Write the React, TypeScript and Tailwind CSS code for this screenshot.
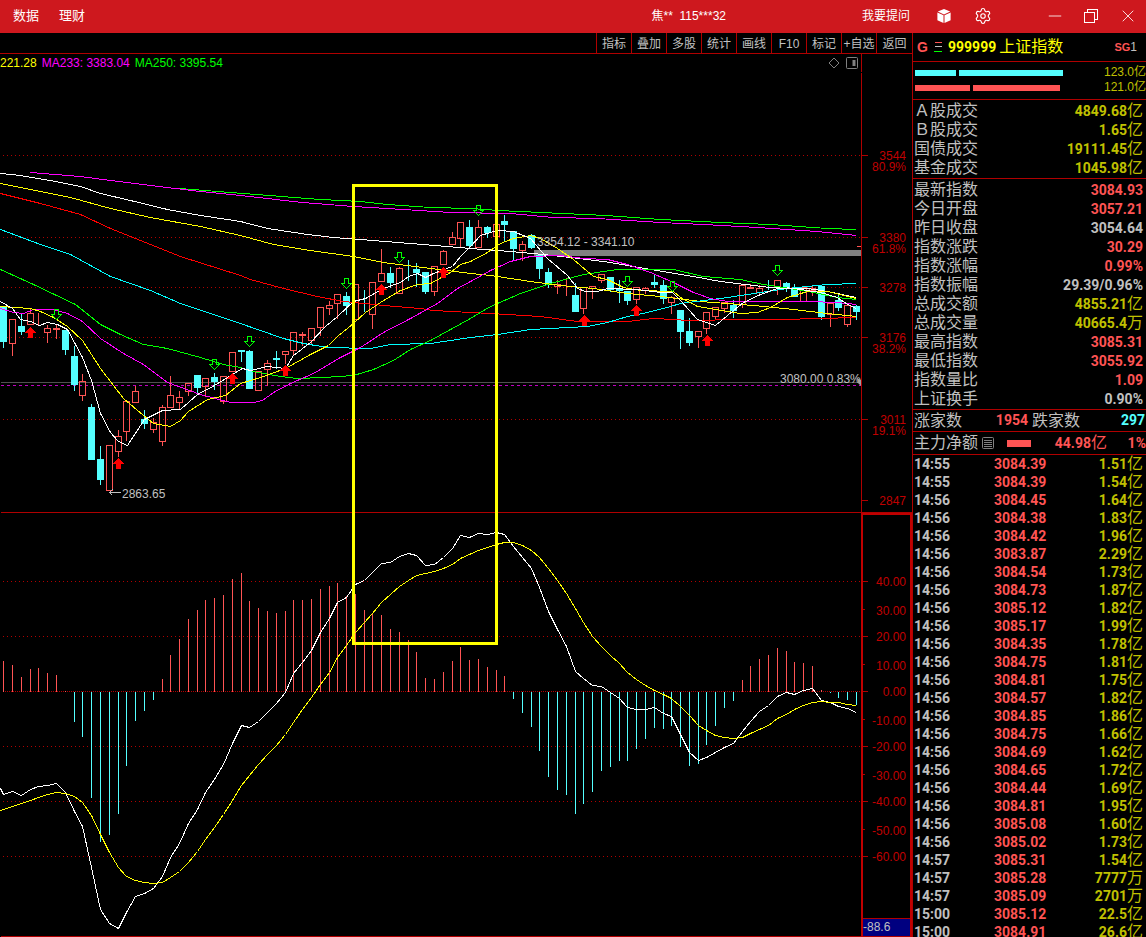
import { Settings, X, Minus } from "lucide-react";

const TOOLS = ["指标", "叠加", "多股", "统计", "画线", "F10", "标记", "+自选", "返回"];

type Quote = { label: string; value: string; unit?: string; color: string };

const RED = "text-[#ff5454]";
const GOLD = "text-[#c0c000]";
const GRAY = "text-[#c0c0c0]";

const TURNOVER: Quote[] = [
  { label: "Ａ股成交", value: "4849.68", unit: "亿", color: GOLD },
  { label: "Ｂ股成交", value: "1.65", unit: "亿", color: GOLD },
  { label: "国债成交", value: "19111.45", unit: "亿", color: GOLD },
  { label: "基金成交", value: "1045.98", unit: "亿", color: GOLD },
];

const QUOTES: Quote[] = [
  { label: "最新指数", value: "3084.93", color: RED },
  { label: "今日开盘", value: "3057.21", color: RED },
  { label: "昨日收盘", value: "3054.64", color: GRAY },
  { label: "指数涨跌", value: "30.29", color: RED },
  { label: "指数涨幅", value: "0.99%", color: RED },
  { label: "指数振幅", value: "29.39/0.96%", color: GRAY },
  { label: "总成交额", value: "4855.21", unit: "亿", color: GOLD },
  { label: "总成交量", value: "40665.4", unit: "万", color: GOLD },
  { label: "最高指数", value: "3085.31", color: RED },
  { label: "最低指数", value: "3055.92", color: RED },
  { label: "指数量比", value: "1.09", color: RED },
  { label: "上证换手", value: "0.90%", color: GRAY },
];

const TICKS = [
  ["14:55", "3084.39", "1.51", "亿"],
  ["14:55", "3084.39", "1.54", "亿"],
  ["14:56", "3084.45", "1.64", "亿"],
  ["14:56", "3084.38", "1.83", "亿"],
  ["14:56", "3084.42", "1.96", "亿"],
  ["14:56", "3083.87", "2.29", "亿"],
  ["14:56", "3084.54", "1.73", "亿"],
  ["14:56", "3084.73", "1.87", "亿"],
  ["14:56", "3085.12", "1.82", "亿"],
  ["14:56", "3085.17", "1.99", "亿"],
  ["14:56", "3084.35", "1.78", "亿"],
  ["14:56", "3084.75", "1.81", "亿"],
  ["14:56", "3084.81", "1.75", "亿"],
  ["14:56", "3084.57", "1.82", "亿"],
  ["14:56", "3084.85", "1.86", "亿"],
  ["14:56", "3084.75", "1.66", "亿"],
  ["14:56", "3084.69", "1.62", "亿"],
  ["14:56", "3084.65", "1.72", "亿"],
  ["14:56", "3084.44", "1.69", "亿"],
  ["14:56", "3084.81", "1.95", "亿"],
  ["14:56", "3085.08", "1.60", "亿"],
  ["14:56", "3085.02", "1.73", "亿"],
  ["14:57", "3085.31", "1.54", "亿"],
  ["14:57", "3085.28", "7777", "万"],
  ["14:57", "3085.09", "2701", "万"],
  ["15:00", "3085.12", "22.5", "亿"],
  ["15:00", "3084.91", "26.6", "亿"],
];

// [up, body top, body bottom, high, low]
const CANDLES = [
  [0, 306, 341, 306, 347], [1, 319, 343, 319, 355], [0, 326, 331, 313, 334], [1, 313, 324, 308, 324],
  [1, 320, 320, 312, 324], [1, 328, 332, 324, 342], [1, 328, 329, 323, 338], [0, 330, 349, 329, 354],
  [0, 356, 384, 345, 390], [1, 381, 395, 373, 400], [0, 407, 459, 403, 459], [0, 459, 479, 445, 484],
  [1, 445, 490, 445, 490], [1, 436, 451, 429, 456], [1, 401, 431, 401, 440], [1, 391, 402, 385, 402],
  [0, 419, 423, 409, 428], [1, 422, 429, 417, 432], [1, 407, 441, 404, 445], [1, 395, 407, 375, 407],
  [1, 397, 402, 390, 408], [1, 383, 391, 383, 395], [0, 375, 387, 374, 392], [1, 378, 386, 378, 396],
  [0, 377, 381, 372, 389], [1, 376, 401, 376, 403], [1, 352, 371, 352, 371], [0, 350, 351, 350, 361],
  [0, 351, 388, 349, 388], [1, 371, 390, 371, 390], [1, 363, 369, 359, 385], [0, 358, 359, 350, 368],
  [1, 351, 354, 351, 363], [1, 332, 350, 332, 354], [1, 334, 335, 331, 345], [1, 328, 340, 328, 343],
  [1, 307, 327, 307, 335], [1, 305, 308, 300, 314], [1, 294, 303, 294, 318], [0, 296, 305, 291, 314],
  [1, 284, 319, 284, 319], [0, 298, 298, 289, 311], [1, 282, 314, 282, 328], [1, 273, 281, 248, 281],
  [0, 273, 282, 266, 287], [1, 268, 293, 266, 293], [0, 268, 268, 259, 280], [0, 269, 272, 262, 286],
  [0, 272, 291, 271, 293], [1, 266, 291, 266, 295], [1, 251, 264, 249, 264], [1, 237, 244, 231, 244],
  [1, 222, 238, 222, 247], [0, 227, 245, 219, 247], [1, 227, 247, 219, 247], [0, 227, 232, 225, 237],
  [1, 224, 236, 224, 236], [0, 221, 224, 214, 240], [0, 231, 248, 231, 260], [1, 244, 250, 240, 260],
  [0, 235, 247, 233, 248], [0, 255, 268, 255, 278], [0, 272, 284, 267, 287], [1, 284, 286, 279, 293],
  [1, 287, 287, 277, 295], [0, 295, 311, 282, 311], [1, 287, 308, 287, 313], [1, 286, 288, 285, 298],
  [1, 274, 280, 273, 282], [0, 277, 289, 276, 291], [0, 288, 290, 279, 302], [0, 291, 300, 290, 304],
  [1, 287, 299, 287, 303], [1, 288, 290, 286, 293], [0, 282, 284, 273, 287], [0, 285, 298, 279, 303],
  [1, 297, 302, 295, 313], [0, 310, 331, 310, 348], [0, 331, 342, 317, 345], [1, 331, 336, 331, 347],
  [1, 312, 328, 312, 333], [1, 307, 316, 307, 319], [1, 302, 308, 302, 312], [0, 305, 310, 299, 317],
  [1, 285, 304, 285, 307], [1, 287, 288, 283, 288], [1, 288, 292, 284, 295], [0, 287, 287, 279, 289],
  [1, 280, 287, 279, 294], [0, 283, 288, 281, 291], [0, 288, 296, 283, 296], [1, 287, 301, 287, 301],
  [1, 288, 290, 284, 295], [0, 286, 316, 285, 319], [1, 303, 314, 303, 326], [0, 300, 307, 293, 310],
  [1, 305, 324, 304, 326], [0, 306, 311, 304, 319],
];

const MA_LINES = [
  { stroke: "#00ff00", points: "179,188 230,192 320,199 360,201 387,204 430,207 470,208 498,210 562,213 606,215 660,219 700,221 720,222 770,224 827,228 856,229" },
  { stroke: "#ff00ff", points: "30,172 80,176 110,180 150,185 200,191 240,195 302,202 353,206 403,209 450,212 510,213 553,217 597,218 660,222 703,224 757,227 817,231 856,235" },
  { stroke: "#ffffff", points: "0,173 20,175 55,181 80,186 100,193 130,200 167,209 200,215 240,221 267,228 307,234 333,237 360,239 410,243 447,246 470,248 510,251 543,254 570,257 610,262 650,269 693,276 720,281 770,287 807,288 827,291 856,297" },
  { stroke: "#ffff00", points: "0,183 30,189 70,197 110,208 150,217 200,226 240,235 273,244 310,250 353,256 383,262 430,268 470,273 490,275 530,281 560,285 593,288 627,293 660,296 700,301 753,305 793,309 827,313 856,316" },
  { stroke: "#ff0000", points: "0,193 40,203 80,214 110,228 150,244 180,256 240,275 250,279 283,288 317,296 343,301 383,305 420,308 433,310 470,312 490,313 540,316 577,321 627,321 653,318 673,319 687,320 743,319 780,319 820,318 856,317" },
  { stroke: "#00ffff", points: "0,229 40,244 70,254 110,276 150,290 180,303 240,323 257,329 283,338 303,343 327,347 370,348 390,344 430,343 470,337 497,334 530,329 587,326 607,322 627,316 647,312 670,306 680,303 727,297 760,292 787,288 827,284 856,283" },
  { stroke: "#00ff00", points: "0,269 33,284 75,304 100,324 120,334 143,344 167,348 200,357 223,364 240,367 253,371 280,376 297,378 323,377 353,375 373,369 393,360 410,349 430,340 450,329 470,318 490,306 520,293 550,283 583,274 617,269 673,269 703,276 740,279 763,284 790,288 813,292 837,297 856,299" },
  { stroke: "#ff00ff", points: "0,308 13,312 23,313 33,309 53,309 67,313 82,321 100,338 123,353 143,364 167,382 200,394 230,402 253,402 262,400 273,392 290,383 313,373 340,357 360,347 383,332 410,318 437,303 457,288 470,281 490,270 510,261 530,256 560,255 583,258 607,259 627,264 650,272 673,282 693,292 710,298 727,301 807,301 837,302 856,304" },
  { stroke: "#ffff00", points: "0,306 30,308 40,311 53,317 67,326 82,340 100,368 123,398 143,415 153,423 170,426 180,420 188,411 207,399 225,395 240,383 260,377 285,368 310,354 328,345 337,336 353,323 365,312 380,302 400,290 417,284 430,283 450,272 460,264 470,261 487,252 500,243 513,238 530,235 540,238 557,248 573,259 593,276 607,279 623,287 640,290 673,291 680,297 697,306 740,313 757,312 770,307 787,297 807,291 827,291 856,298" },
  { stroke: "#ffffff", points: "0,301 12,308 20,319 30,321 39,325 47,322 57,324 67,329 82,357 91,380 100,413 110,432 118,441 127,445 144,419 162,410 180,409 197,394 214,385 232,374 242,368 250,370 267,366 285,368 293,355 310,342 325,326 337,316 353,301 365,298 383,288 400,282 408,276 417,273 425,277 433,273 452,266 460,256 470,246 480,235 497,230 513,231 530,238 547,258 567,275 577,288 585,291 597,291 607,288 637,289 660,292 672,292 680,300 697,319 715,325 733,310 743,302 760,294 777,288 793,288 820,292 837,297 847,304 856,308" },
];

const BUY_MARKS = [[30, 327], [118, 458], [232, 373], [285, 365], [381, 284], [443, 267], [584, 315], [636, 305], [707, 335]];
const SELL_MARKS = [[56, 309], [214, 359], [249, 336], [346, 278], [399, 252], [478, 205], [627, 276], [672, 281], [777, 265]];

const PRICE_AXIS = [
  { y: 155, price: "3544", pct: "80.9%" },
  { y: 237, price: "3380", pct: "61.8%" },
  { y: 287, price: "3278" },
  { y: 337, price: "3176", pct: "38.2%" },
  { y: 419, price: "3011", pct: "19.1%" },
  { y: 500, price: "2847" },
];

const ZERO = 691;

// bar ends, measured on the same scale as ZERO
const HIST = [
  660, 664, 676, 668, 667, 672, 674, 690, 721, 736, 797, 841, 834, 813, 765, 720, 710, 699, 678, 654,
  638, 618, 609, 599, 597, 594, 578, 572, 600, 607, 610, 612, 610, 599, 599, 598, 588, 585, 582, 595,
  593, 609, 612, 614, 628, 631, 639, 651, 677, 678, 671, 660, 646, 659, 658, 666, 669, 675, 698, 712,
  726, 750, 776, 789, 794, 813, 803, 791, 770, 766, 760, 760, 748, 738, 727, 728, 725, 746, 765, 763,
  744, 725, 707, 700, 679, 665, 658, 654, 647, 650, 661, 662, 665, 689, 692, 697, 699, 704,
];

const DIF = [
  794, 791, 795, 789, 786, 785, 783, 792, 811, 826, 867, 909, 923, 928, 912, 896, 893, 888, 876, 857,
  843, 823, 809, 792, 779, 764, 743, 725, 727, 721, 712, 703, 692, 673, 662, 650, 632, 618, 602, 597,
  584, 580, 572, 563, 562, 556, 553, 555, 565, 564, 557, 548, 535, 537, 533, 534, 532, 534, 546, 557,
  568, 587, 611, 629, 646, 671, 678, 685, 686, 692, 698, 707, 709, 709, 707, 713, 716, 734, 752, 760,
  757, 752, 747, 743, 731, 721, 711, 705, 696, 692, 694, 690, 688, 700, 702, 706, 708, 712,
];

const DEA = [
  809, 806, 803, 800, 797, 794, 792, 793, 796, 802, 815, 834, 852, 867, 876, 880, 882, 883, 882, 877,
  871, 862, 851, 839, 827, 814, 800, 785, 775, 764, 754, 745, 734, 722, 709, 697, 684, 672, 657, 645,
  632, 622, 613, 602, 594, 586, 580, 575, 573, 571, 568, 564, 558, 554, 550, 547, 544, 542, 542, 545,
  550, 557, 568, 580, 593, 608, 622, 636, 646, 655, 663, 672, 679, 685, 690, 694, 698, 706, 715, 725,
  730, 735, 737, 738, 737, 733, 729, 725, 718, 714, 709, 705, 702, 701, 702, 702, 704, 705,
];

const MACD_AXIS = [
  { y: 581, label: "40.00", major: true },
  { y: 609, label: "30.00" },
  { y: 636, label: "20.00", major: true },
  { y: 664, label: "10.00" },
  { y: 691, label: "0.00", major: true },
  { y: 719, label: "-10.00" },
  { y: 746, label: "-20.00", major: true },
  { y: 774, label: "-30.00" },
  { y: 801, label: "-40.00", major: true },
  { y: 829, label: "-50.00" },
  { y: 856, label: "-60.00", major: true },
];

const barX = (i: number) => Math.round(3.3 + i * 8.79);
const toPoints = (ys: number[]) => ys.map((y, i) => `${barX(i)},${y}`).join(" ");

function TitleBar() {
  return (
    <header className="flex h-[33px] shrink-0 items-center bg-[#ce181e] pb-[2px] text-[13px] text-white">
      <nav className="flex flex-1 gap-5 pl-[13px]">
        <button type="button">数据</button>
        <button type="button">理财</button>
      </nav>
      <span className="text-[12px] whitespace-pre">焦**  115***32</span>
      <div className="ml-[136px] flex items-center">
        <button type="button" className="text-[12px]">我要提问</button>
        <button type="button" aria-label="工具箱" className="ml-[27px]">
          <svg width="14" height="16" viewBox="0 0 14 16" fill="#fff">
            <path d="M7 1L13.2 3.6L7 6.4L0.8 3.6Z" />
            <path d="M0.4 4.6L6.5 7.3V15L0.4 12.2Z" />
            <path d="M13.6 4.6L7.5 7.3V15L13.6 12.2Z" />
          </svg>
        </button>
        <button type="button" aria-label="设置" className="ml-[23px]">
          <Settings className="h-[18px] w-[18px]" strokeWidth={1.5} />
        </button>
        <button type="button" aria-label="最小化" className="ml-[53px]">
          <Minus className="h-5 w-5" strokeWidth={1} />
        </button>
        <button type="button" aria-label="还原" className="ml-[19px]">
          <svg width="14" height="14" viewBox="0 0 14 14" fill="none" stroke="#fff" shapeRendering="crispEdges">
            <path d="M3.5 3.5V0.5H13.5V10.5H10.5" />
            <rect x="0.5" y="3.5" width="10" height="10" />
          </svg>
        </button>
        <button type="button" aria-label="关闭" className="mr-2 ml-5">
          <X className="h-5 w-5" strokeWidth={1} />
        </button>
      </div>
    </header>
  );
}

function Toolbar() {
  return (
    <div className="flex h-[21px] shrink-0 justify-end border-b border-[#b00000] text-[12px] text-[#c0c0c0]">
      {TOOLS.map((tool) => (
        <button key={tool} type="button" className="w-[35px] border-l border-[#b00000] pt-[2px] whitespace-nowrap last:w-9">
          {tool}
        </button>
      ))}
    </div>
  );
}

function Legend() {
  return (
    <div className="flex h-[18px] shrink-0 text-[12px]">
      <div className="flex flex-1 items-center gap-[5px]">
        <span className="text-[#ffff00]">221.28</span>
        <span className="text-[#ff00ff]">MA233: 3383.04</span>
        <span className="text-[#00ff00]">MA250: 3395.54</span>
        <svg className="mr-[3px] ml-auto" width="30" height="12" viewBox="0 0 30 12" fill="none" stroke="#808080">
          <path d="M6 1L11 6L6 11L1 6Z" />
          <rect x="18.5" y="0.5" width="11" height="11" rx="1" />
          <path d="M26 3V9" strokeWidth="3" />
        </svg>
      </div>
      <div className="w-[51px] border-l border-[#b00000]" />
    </div>
  );
}

function PriceChart() {
  return (
    <svg
      className="min-h-0 w-full flex-[441]"
      viewBox="0 72 912 441"
      preserveAspectRatio="xMaxYMin meet"
      role="img"
      aria-label="K线图"
    >
      <g transform="translate(0.5 0.5)" fill="none" shapeRendering="crispEdges">
        {PRICE_AXIS.map((a) => (
          <g key={a.y} stroke="#b00000">
            {a.y < 500 && <path d={`M2.5 ${a.y}H860`} strokeDasharray="1 3" />}
            <path d={`M861 ${a.y}H867`} />
          </g>
        ))}
        <path d="M0 382H860" stroke="#505050" />
        <path d="M0.5 385H860" stroke="#c000c0" strokeDasharray="3 3" />
        <rect x="534" y="250" width="326" height="5" fill="#808080" stroke="#808080" />
        <path d="M856 246H861" stroke="#ff5454" />

        {CANDLES.map(([up, top, bottom, high, low], i) => {
          const x = barX(i);
          const color = up ? "#ff5454" : "#54ffff";
          return (
            <g key={i} stroke={color}>
              <path d={`M${x} ${high}V${top}M${x} ${bottom}V${low}`} />
              <rect x={x - 3} y={top} width="6" height={bottom - top} fill={up ? "none" : color} />
            </g>
          );
        })}

        {MA_LINES.map((line, i) => (
          <polyline key={i} points={line.points} stroke={line.stroke} />
        ))}

        {BUY_MARKS.map(([x, y]) => (
          <path key={x} d={`M${x} ${y}l5 5h-3v5h-4v-5h-3z`} fill="#ff0000" stroke="#ff0000" />
        ))}
        {SELL_MARKS.map(([x, y]) => (
          <path key={x} d={`M${x - 2} ${y}h4v5h3l-5 5l-5 -5h3z`} stroke="#00ff00" />
        ))}

        <path d="M109 492H120M109 492L112 489M109 492L112 495" stroke="#c0c0c0" />
        <path d="M861 72V512M0 512H911" stroke="#b00000" />
      </g>

      <g fontSize="12" fill="#c0c0c0">
        <text x="122" y="498">2863.65</text>
        <text x="537" y="246">3354.12 - 3341.10</text>
        <text x="780" y="383">3080.00 0.83%</text>
      </g>
      <path d="M857 378L861 380V386L858 383Z" fill="#a0a0a0" />
      <g fontSize="12" fill="#c00000" textAnchor="end">
        {PRICE_AXIS.map((a) => (
          <g key={a.y}>
            <text x="906" y={a.y + 5}>{a.price}</text>
            {a.pct && <text x="906" y={a.y + 16}>{a.pct}</text>}
          </g>
        ))}
      </g>

      {/* highlighted period, continues in the indicator panel */}
      <path d="M353.5 513V185.5H496.5V513" fill="none" stroke="#ffff00" strokeWidth="3" />
    </svg>
  );
}

function MacdChart() {
  return (
    <svg
      className="min-h-0 w-full flex-[424]"
      viewBox="0 513 912 424"
      preserveAspectRatio="xMaxYMin meet"
      role="img"
      aria-label="MACD"
    >
      <g transform="translate(0.5 0.5)" fill="none" shapeRendering="crispEdges">
        {MACD_AXIS.map((a) => (
          <g key={a.y} stroke="#b00000">
            {a.major && (
              <path d={`M2.5 ${a.y}H860`} strokeDasharray={a.y === ZERO ? "1 1" : "1 3"} />
            )}
            <path d={`M862 ${a.y}H${a.major ? 867 : 864}`} />
          </g>
        ))}
        {HIST.map((y, i) => (
          <path key={i} d={`M${barX(i)} ${ZERO}V${y}`} stroke={y < ZERO ? "#ff5454" : "#54ffff"} />
        ))}
        <polyline points={`0,788 ${toPoints(DIF)}`} stroke="#ffffff" />
        <polyline points={`0,810 ${toPoints(DEA)}`} stroke="#ffff00" />
        <rect x="863" y="919" width="47" height="16" fill="#000080" stroke="#000080" />
        <path d="M0 936H911M862 918H911" stroke="#b00000" />
      </g>
      <path d="M862 513V937M911 513V937M861 514H912" stroke="#c00000" strokeWidth="2" />
      <g fontSize="12" fill="#c00000" textAnchor="end">
        {MACD_AXIS.map((a) => (
          <text key={a.y} x="906" y={a.y + (a.major ? 5 : 6)}>{a.label}</text>
        ))}
      </g>
      <text x="863" y="931" fontSize="12" fill="#c0c0c0">-88.6</text>
      <path d="M353.5 513V643.5H496.5V513" fill="none" stroke="#ffff00" strokeWidth="3" />
    </svg>
  );
}

function QuoteTable({ rows }: { rows: Quote[] }) {
  return (
    <div className="border-t border-[#b00000] py-px">
      <table className="w-full border-collapse">
        <tbody>
          {rows.map((row) => (
            <tr key={row.label}>
              <th scope="row" className="p-0 pl-px text-left text-[16px] leading-[19px] font-normal">
                {row.label}
              </th>
              <td className="p-0 pr-[3px]">
                <Amount value={row.value} unit={row.unit} className={row.color} />
              </td>
            </tr>
          ))}
        </tbody>
      </table>
    </div>
  );
}

function Amount({ value, unit, className }: { value: string; unit?: string; className: string }) {
  return (
    <span className={`flex h-[18px] items-center justify-end leading-[18px] ${className}`}>
      <b className="font-['Roboto'] text-[14px]">{value}</b>
      {unit && <span className="text-[16px]">{unit}</span>}
    </span>
  );
}

function QuotePanel() {
  return (
    <aside className="flex w-[234px] shrink-0 flex-col overflow-hidden border-l border-[#b00000] text-[#c0c0c0]">
      <div className="flex h-7 shrink-0 items-center pr-[9px] pl-1">
        <b className="w-[17px] text-[14px] text-[#ff5454]">G</b>
        <svg width="8" height="10" viewBox="0 0 8 10" shapeRendering="crispEdges">
          <path d="M1 0.5H8" stroke="#ff5454" />
          <path d="M1 4.5H8" stroke="#c0c0c0" />
          <path d="M0 9.5H8" stroke="#00ff00" />
        </svg>
        <b className="ml-[6px] font-['Roboto'] text-[14px] text-[#ffff00]">999999</b>
        <h1 className="ml-[3px] text-[16px] text-[#ffff00]">上证指数</h1>
        <span className="ml-auto text-[12px]">
          <b className="text-[11px] text-[#ff5454]">SG</b>1
        </span>
      </div>

      <div className="h-[38px] shrink-0 border-t border-[#b00000] pt-[3px] pl-[2px] text-[12px] leading-[15px] text-[#c0c000]">
        <div className="flex items-center gap-[3px]">
          <i className="h-[6px] w-[41px] bg-[#54ffff]" />
          <i className="h-[6px] w-[104px] bg-[#54ffff]" />
          <span className="ml-auto">123.0亿</span>
        </div>
        <div className="flex items-center gap-[3px]">
          <i className="h-[6px] w-[55px] bg-[#ff5454]" />
          <i className="h-[6px] w-[87px] bg-[#ff5454]" />
          <span className="ml-auto">121.0亿</span>
        </div>
      </div>

      <QuoteTable rows={TURNOVER} />
      <QuoteTable rows={QUOTES} />

      <div className="flex h-[22px] shrink-0 items-center border-t border-[#b00000] pr-[1px] pl-px text-[16px]">
        <span>涨家数</span>
        <b className="ml-auto font-['Roboto'] text-[14px] text-[#ff5454]">1954</b>
        <span className="ml-1">跌家数</span>
        <b className="w-[65px] text-right font-['Roboto'] text-[14px] text-[#54ffff]">297</b>
      </div>
      <div className="flex h-[23px] shrink-0 items-center border-t border-[#b00000] pl-px text-[16px]">
        <span>主力净额</span>
        <svg className="ml-[4px]" width="12" height="12" viewBox="0 0 12 12" fill="none" stroke="#808080">
          <rect x="0.5" y="0.5" width="11" height="11" rx="1" />
          <path d="M2 3.5H10M2 5.5H10M2 7.5H10M2 9.5H10" />
        </svg>
        <i className="ml-[13px] h-[7px] w-6 bg-[#ff5454]" />
        <div className="ml-auto">
          <Amount value="44.98" unit="亿" className="text-[#ff5454]" />
        </div>
        <div className="w-[39px]">
          <Amount value="1%" className="text-[#ff5454]" />
        </div>
      </div>

      <div className="min-h-0 flex-1 overflow-hidden border-t border-[#b00000]">
        <table className="w-full table-fixed border-collapse">
          <tbody>
            {TICKS.map(([time, price, amount, unit], i) => (
              <tr key={i} className="h-[18px] leading-[18px]">
                <td className="w-[81px] p-0 pl-px font-['Roboto'] text-[14px] font-bold">{time}</td>
                <td className="w-[70px] p-0 font-['Roboto'] text-[14px] font-bold text-[#ff5454]">{price}</td>
                <td className="p-0 pr-[3px]">
                  <Amount value={amount} unit={unit} className={GOLD} />
                </td>
              </tr>
            ))}
          </tbody>
        </table>
      </div>
    </aside>
  );
}

export default function App() {
  return (
    <div className="flex h-screen flex-col overflow-hidden bg-black font-['Liberation_Sans','Noto_Sans_CJK_SC',sans-serif]">
      <TitleBar />
      <div className="flex min-h-0 flex-1">
        <main className="flex min-w-0 flex-1 flex-col">
          <Toolbar />
          <Legend />
          <PriceChart />
          <MacdChart />
        </main>
        <QuotePanel />
      </div>
    </div>
  );
}
